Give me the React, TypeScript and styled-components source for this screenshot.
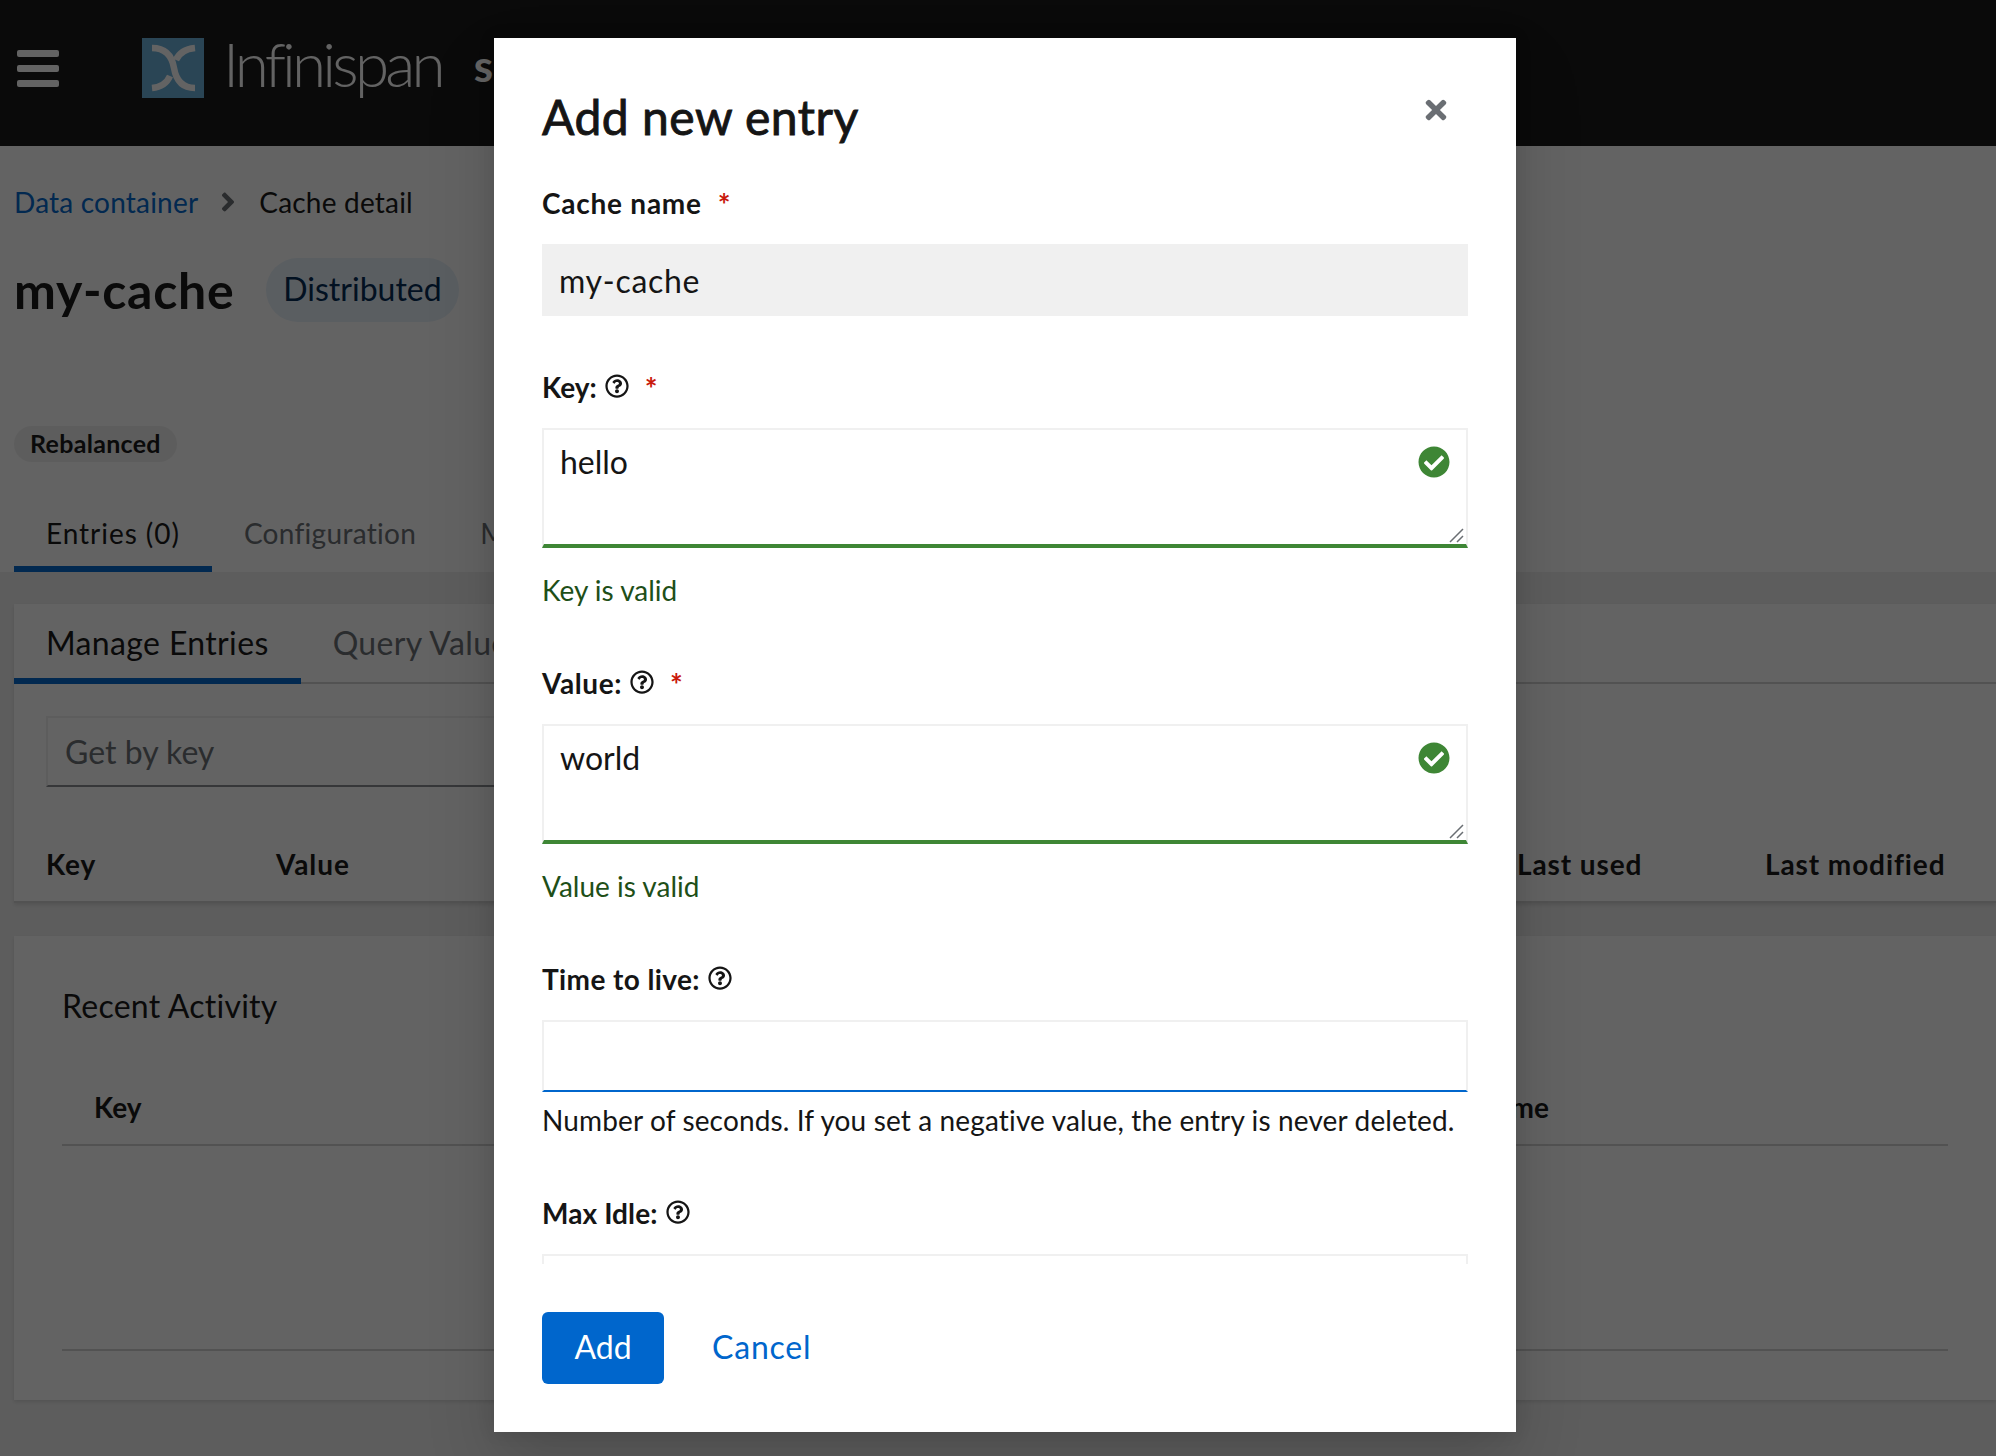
import React from "react";
import styled, { createGlobalStyle } from "styled-components";
import { FaAngleRight, FaCheckCircle, FaRegQuestionCircle, FaTimes } from "react-icons/fa";

const GlobalStyle = createGlobalStyle`
  html, body {
    margin: 0;
    padding: 0;
    height: 100%;
    overflow: hidden;
    background: #f0f0f0;
    font-family: Lato, "Open Sans", sans-serif;
    color: #151515;
  }
  * { box-sizing: border-box; }
`;

const Page = styled.div`
  position: relative;
  width: 1996px;
  height: 1456px;
  overflow: hidden;
`;

const Masthead = styled.header`
  height: 146px;
  background: #151515;
  display: flex;
  align-items: center;
  padding: 0 0 10px 17px;
`;

const Burger = styled.div`
  width: 42px;
  display: flex;
  flex-direction: column;
  gap: 8px;
  span {
    height: 7px;
    border-radius: 2px;
    background: #fff;
  }
`;

const Brand = styled.div`
  margin-left: 83px;
  display: flex;
  align-items: center;
  gap: 19px;
  color: #fff;
`;

const Wordmark = styled.span`
  font-size: 62px;
  font-weight: 300;
  letter-spacing: -3.8px;
  line-height: 60px;
  padding-bottom: 10px;
`;

const Product = styled.span`
  margin-left: 13px;
  font-size: 44px;
  font-weight: 700;
  padding-bottom: 6px;
`;

const Hero = styled.section`
  background: #fff;
  padding: 36px 0 0 14px;
`;

const Breadcrumb = styled.nav`
  height: 40px;
  display: flex;
  align-items: center;
  font-size: 28px;
  letter-spacing: 0.2px;
  a { color: #06c; }
  svg {
    color: #6a6e73;
    margin: 0 16px 0 15px;
    width: 30px;
    height: 30px;
  }
`;

const TitleRow = styled.div`
  margin-top: 36px;
  height: 64px;
  display: flex;
  align-items: center;
  gap: 32px;
`;

const PageTitle = styled.h1`
  margin: 0;
  font-size: 50px;
  font-weight: 700;
  letter-spacing: 0.7px;
`;

const TypeBadge = styled.span`
  height: 64px;
  border-radius: 32px;
  padding: 0 17px 3px;
  display: flex;
  align-items: center;
  background: #e7f1fa;
  color: #002952;
  font-size: 32px;
`;

const StatusBadge = styled.span`
  display: inline-flex;
  align-items: center;
  margin-top: 104px;
  height: 36px;
  border-radius: 18px;
  padding: 0 16px 2px;
  background: #f0f0f0;
  font-size: 25px;
  font-weight: 700;
  letter-spacing: 0.3px;
`;

const TabBar = styled.div`
  display: flex;
  margin-top: 36px;
`;

const Tab = styled.div<{ $active?: boolean; $large?: boolean }>`
  height: ${(p) => (p.$large ? "80px" : "74px")};
  padding: 2px 32px 0;
  display: flex;
  align-items: center;
  white-space: nowrap;
  font-size: ${(p) => (p.$large ? "32px" : "28px")};
  letter-spacing: ${(p) => (p.$large ? "0.36px" : "0.3px")};
  color: ${(p) => (p.$active ? "#151515" : "#6a6e73")};
  border-bottom: 6px solid ${(p) => (p.$active ? "#06c" : "transparent")};
`;

const CountTab = styled(Tab)`
  letter-spacing: 0.95px;
`;

const Content = styled.main`
  padding: 32px 0 0 14px;
  display: flex;
  flex-direction: column;
  gap: 33px;
`;

const Card = styled.div`
  background: #fff;
  box-shadow: 0 2px 4px rgba(3, 3, 3, 0.12);
`;

const CardTabs = styled.div`
  display: flex;
  border-bottom: 2px solid #d2d2d2;
  height: 80px;
`;

const SearchBox = styled.input`
  display: block;
  margin: 32px 0 0 32px;
  width: 640px;
  height: 71px;
  padding: 0 17px;
  font: inherit;
  font-size: 32px;
  background: #fff;
  border: 2px solid #f0f0f0;
  border-bottom-color: #8a8d90;
  outline: none;
  &::placeholder { color: #6a6e73; opacity: 1; }
`;

const EntriesHead = styled.div`
  margin-top: 40px;
  height: 76px;
  padding: 0 32px;
  display: grid;
  grid-template-columns: 230px 1241px 248px 1fr;
  align-items: center;
  font-size: 28px;
  font-weight: 700;
  letter-spacing: 0.9px;
  border-bottom: 2px solid #d2d2d2;
`;

const ActivityCard = styled(Card)`
  height: 464px;
  padding: 50px 48px 0;
`;

const ActivityTitle = styled.h2`
  margin: 0;
  font-size: 32px;
  font-weight: 400;
  line-height: 40px;
  letter-spacing: 0.25px;
`;

const ActivityHead = styled.div`
  margin-top: 44px;
  height: 76px;
  padding: 0 399px 0 32px;
  display: flex;
  align-items: center;
  justify-content: space-between;
  font-size: 28px;
  font-weight: 700;
  border-bottom: 2px solid #d2d2d2;
`;

const ActivityEmpty = styled.div`
  height: 205px;
  border-bottom: 2px solid #d2d2d2;
`;

const Backdrop = styled.div`
  position: absolute;
  inset: 0;
  background: rgba(3, 3, 3, 0.62);
`;

const Modal = styled.div`
  position: absolute;
  left: 494px;
  top: 38px;
  width: 1022px;
  height: 1394px;
  background: #fff;
  display: flex;
  flex-direction: column;
  box-shadow: 0 32px 64px rgba(3, 3, 3, 0.16), 0 0 16px rgba(3, 3, 3, 0.1);
`;

const ModalHeader = styled.div`
  flex: none;
  height: 110px;
  padding: 48px 48px 0;
`;

const ModalTitle = styled.h1`
  margin: 0;
  font-size: 48px;
  font-weight: 400;
  line-height: 62px;
  letter-spacing: 0.5px;
  -webkit-text-stroke: 0.9px #151515;
`;

const CloseButton = styled.button`
  position: absolute;
  top: 56px;
  right: 64px;
  width: 32px;
  height: 32px;
  padding: 0;
  border: 0;
  background: none;
  color: #6a6e73;
  display: flex;
  align-items: center;
  justify-content: center;
  svg { width: 30px; height: 30px; }
`;

const ModalBody = styled.div`
  flex: 1;
  min-height: 0;
  overflow: hidden;
  padding: 36px 48px 0;
  display: flex;
  flex-direction: column;
  gap: 52px;
`;

const Field = styled.div`
  flex: none;
`;

const Label = styled.label<{ $tracking?: number }>`
  height: 40px;
  margin-bottom: 20px;
  padding-bottom: 2px;
  display: flex;
  align-items: center;
  font-size: 28px;
  font-weight: 700;
  letter-spacing: ${(p) => p.$tracking ?? 0}px;
  svg {
    margin-left: 8px;
    width: 24px;
    height: 24px;
    position: relative;
    top: -1px;
  }
`;

const Required = styled.span`
  margin-left: 16px;
  font-size: 30px;
  color: #c9190b;
  position: relative;
  top: 1px;
`;

const TextInput = styled.input<{ $disabled?: boolean }>`
  display: block;
  width: 100%;
  height: 72px;
  padding: 0 ${(p) => (p.$disabled ? "17px" : "16px")};
  font: inherit;
  font-size: 32px;
  letter-spacing: ${(p) => (p.$disabled ? "0.7px" : "0")};
  color: #151515;
  outline: none;
  border: ${(p) => (p.$disabled ? "0" : "2px solid #f0f0f0")};
  border-bottom: ${(p) => (p.$disabled ? "0" : "2px solid #06c")};
  background: ${(p) => (p.$disabled ? "#f0f0f0" : "#fff")};
`;

const AreaWrap = styled.div`
  position: relative;
  height: 120px;
`;

const TextArea = styled.textarea`
  display: block;
  width: 100%;
  height: 120px;
  padding: 8px 16px;
  font: inherit;
  font-size: 32px;
  line-height: 48px;
  color: #151515;
  resize: none;
  outline: none;
  border: 2px solid #f0f0f0;
  border-bottom: 4px solid #3e8635;
`;

const ValidIcon = styled(FaCheckCircle)`
  position: absolute;
  top: 18px;
  right: 18px;
  width: 32px;
  height: 32px;
  color: #3e8635;
`;

const ResizeGrip = styled.svg`
  position: absolute;
  right: 4px;
  bottom: 5px;
  width: 15px;
  height: 15px;
  stroke: #6a6e73;
  stroke-width: 1.5;
`;

const Helper = styled.div<{ $valid?: boolean }>`
  margin-top: ${(p) => (p.$valid ? "22px" : "8px")};
  height: 42px;
  padding-bottom: 2px;
  display: flex;
  align-items: center;
  font-size: 28px;
  white-space: nowrap;
  letter-spacing: ${(p) => (p.$valid ? "0" : "0.14px")};
  color: ${(p) => (p.$valid ? "#1e4f18" : "#151515")};
`;

const ModalFooter = styled.div`
  flex: none;
  padding: 48px;
  display: flex;
  align-items: center;
  gap: 16px;
`;

const PrimaryButton = styled.button`
  height: 72px;
  width: 122px;
  padding: 0 0 4px;
  border: 0;
  border-radius: 6px;
  background: #06c;
  color: #fff;
  font: inherit;
  font-size: 32px;
`;

const LinkButton = styled.button`
  height: 72px;
  padding: 0 32px 4px;
  border: 0;
  background: none;
  color: #06c;
  font: inherit;
  font-size: 32px;
  letter-spacing: 0.8px;
`;

function InfinispanMark() {
  return (
    <svg width="62" height="60" viewBox="0 0 62 60">
      <rect width="62" height="60" fill="#6ab1db" />
      <g fill="none" stroke="#fff" strokeWidth="6.5">
        <path d="M10 10 C24 10 30 18 32 30 C34 42 40 50 53 50" />
        <path d="M53 10 C43 11 37 15 34 22" />
        <path d="M28 38 C25 45 20 49 10 50" />
      </g>
    </svg>
  );
}

function ResizeHandle() {
  return (
    <ResizeGrip viewBox="0 0 15 15">
      <path d="M1 14 L14 1 M8 14 L14 8" />
    </ResizeGrip>
  );
}

function ValidatedArea({ value }: { value: string }) {
  return (
    <AreaWrap>
      <TextArea readOnly defaultValue={value} />
      <ValidIcon />
      <ResizeHandle />
    </AreaWrap>
  );
}

export default function App() {
  return (
    <Page>
      <GlobalStyle />
      <Masthead>
        <Burger>
          <span />
          <span />
          <span />
        </Burger>
        <Brand>
          <InfinispanMark />
          <Wordmark>Infinispan</Wordmark>
          <Product>server</Product>
        </Brand>
      </Masthead>
      <Hero>
        <Breadcrumb>
          <a>Data container</a>
          <FaAngleRight />
          <span>Cache detail</span>
        </Breadcrumb>
        <TitleRow>
          <PageTitle>my-cache</PageTitle>
          <TypeBadge>Distributed</TypeBadge>
        </TitleRow>
        <StatusBadge>Rebalanced</StatusBadge>
        <TabBar>
          <CountTab $active>Entries (0)</CountTab>
          <Tab>Configuration</Tab>
          <Tab>Metrics</Tab>
        </TabBar>
      </Hero>
      <Content>
        <Card>
          <CardTabs>
            <Tab $active $large>Manage Entries</Tab>
            <Tab $large>Query Values</Tab>
          </CardTabs>
          <SearchBox placeholder="Get by key" />
          <EntriesHead>
            <span>Key</span>
            <span>Value</span>
            <span>Last used</span>
            <span>Last modified</span>
          </EntriesHead>
        </Card>
        <ActivityCard>
          <ActivityTitle>Recent Activity</ActivityTitle>
          <ActivityHead>
            <span>Key</span>
            <span>Time</span>
          </ActivityHead>
          <ActivityEmpty />
        </ActivityCard>
      </Content>
      <Backdrop />
      <Modal>
        <ModalHeader>
          <ModalTitle>Add new entry</ModalTitle>
        </ModalHeader>
        <CloseButton aria-label="Close">
          <FaTimes />
        </CloseButton>
        <ModalBody>
          <Field>
            <Label $tracking={0.76}>
              Cache name<Required>*</Required>
            </Label>
            <TextInput $disabled readOnly defaultValue="my-cache" />
          </Field>
          <Field>
            <Label>
              Key:
              <FaRegQuestionCircle />
              <Required>*</Required>
            </Label>
            <ValidatedArea value="hello" />
            <Helper $valid>Key is valid</Helper>
          </Field>
          <Field>
            <Label $tracking={0.6}>
              Value:
              <FaRegQuestionCircle />
              <Required>*</Required>
            </Label>
            <ValidatedArea value="world" />
            <Helper $valid>Value is valid</Helper>
          </Field>
          <Field>
            <Label $tracking={0.4}>
              Time to live:
              <FaRegQuestionCircle />
            </Label>
            <TextInput readOnly />
            <Helper>Number of seconds. If you set a negative value, the entry is never deleted.</Helper>
          </Field>
          <Field>
            <Label $tracking={0.1}>
              Max Idle:
              <FaRegQuestionCircle />
            </Label>
            <TextInput readOnly />
          </Field>
        </ModalBody>
        <ModalFooter>
          <PrimaryButton>Add</PrimaryButton>
          <LinkButton>Cancel</LinkButton>
        </ModalFooter>
      </Modal>
    </Page>
  );
}
